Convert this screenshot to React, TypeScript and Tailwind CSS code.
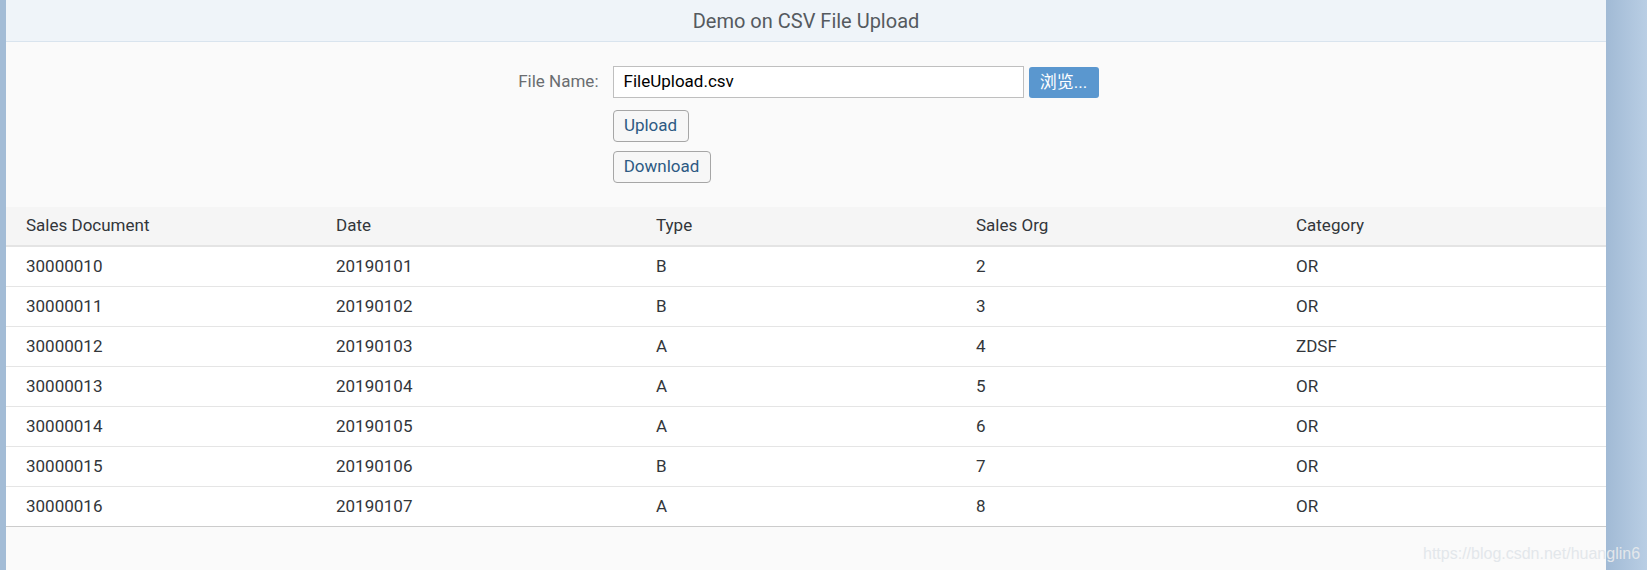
import React from "react";

const rows = [
  ["30000010", "20190101", "B", "2", "OR"],
  ["30000011", "20190102", "B", "3", "OR"],
  ["30000012", "20190103", "A", "4", "ZDSF"],
  ["30000013", "20190104", "A", "5", "OR"],
  ["30000014", "20190105", "A", "6", "OR"],
  ["30000015", "20190106", "B", "7", "OR"],
  ["30000016", "20190107", "A", "8", "OR"],
];

const headers = ["Sales Document", "Date", "Type", "Sales Org", "Category"];

export default function App() {
  return (
    <div
      className="relative flex h-[570px] w-[1647px] overflow-hidden"
      style={{ fontFamily: 'Roboto, "Noto Sans CJK SC", sans-serif' }}
    >
      <div className="w-[6px] shrink-0 bg-[#a3bcd6]" />
      <div className="flex w-[1600px] shrink-0 flex-col bg-[#fafafa]">
        <div className="flex h-[42px] items-center justify-center border-b border-[#d9e4ee] bg-[#eff4f9] text-[20px] text-[#555a5f]">
          Demo on CSV File Upload
        </div>
        <div className="mx-auto mt-[24px] grid w-[585px] grid-cols-[85px_1fr] gap-x-[14px]">
          <div className="flex h-[32px] items-center justify-end text-[17px] text-[#6a6d70]">File Name:</div>
          <div className="flex flex-col items-start">
            <div className="flex items-start gap-[5px]">
              <div className="flex h-[32px] w-[411px] items-center border border-[#bfbfbf] bg-white px-[10px] text-[17px] text-[#000]">
                FileUpload.csv
              </div>
              <button className="mt-[1px] flex h-[31px] w-[70px] items-center justify-center rounded-[3px] bg-[#5a97cf] text-[17px] text-white">
                浏览...
              </button>
            </div>
            <button className="mt-[12px] flex h-[32px] w-[76px] items-center justify-center rounded-[4px] border border-[#a6a6a6] bg-[#f7f7f7] text-[17px] text-[#2d5a83]">
              Upload
            </button>
            <button className="mt-[9px] flex h-[32px] w-[98px] items-center justify-center rounded-[4px] border border-[#a6a6a6] bg-[#f7f7f7] text-[17px] text-[#2d5a83]">
              Download
            </button>
          </div>
        </div>
        <div className="mt-[24px]">
          <div className="grid h-[40px] grid-cols-5 items-center border-b-2 border-[#e4e4e4] bg-[#f5f5f5] text-[17px] text-[#32363a]">
            {headers.map((h, j) => (
              <div key={h} className={j === 0 ? "pl-[20px]" : "pl-[10px]"}>
                {h}
              </div>
            ))}
          </div>
          {rows.map((r, i) => (
            <div
              key={r[0]}
              className={`grid h-[40px] grid-cols-5 items-center bg-white text-[17px] text-[#32363a] ${
                i === rows.length - 1 ? "border-b border-[#cccccc]" : "border-b border-[#e5e5e5]"
              }`}
            >
              {r.map((c, j) => (
                <div key={j} className={j === 0 ? "pl-[20px]" : "pl-[10px]"}>
                  {c}
                </div>
              ))}
            </div>
          ))}
        </div>
      </div>
      <div className="flex-1 bg-gradient-to-r from-[#a1bad5] to-[#b9cee4]" />
      <div
        className="absolute left-[1423px] top-[542px] text-[16px] text-[#e3e7eb]"
        style={{ fontFamily: '"Liberation Sans", sans-serif' }}
      >
        https://blog.csdn.net/huanglin6
      </div>
    </div>
  );
}
